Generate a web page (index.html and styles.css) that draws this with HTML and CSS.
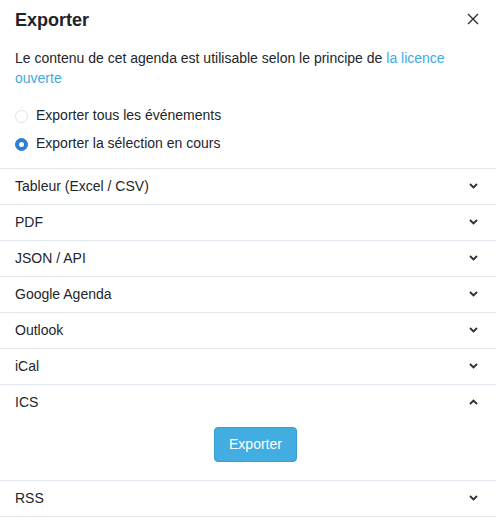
FILE: index.html
```html
<!DOCTYPE html>
<html lang="fr">
<head>
<meta charset="utf-8">
<title>Exporter</title>
<link rel="stylesheet" href="styles.css">
</head>
<body>
<div class="modal">
  <div class="header">
    <h1 class="title">Exporter</h1>
    <button class="close" aria-label="Fermer">
      <svg width="12" height="12" viewBox="0 0 12 12"><path d="M1 1L11 11M11 1L1 11" stroke="#2b2f36" stroke-width="1.4" fill="none"/></svg>
    </button>
  </div>
  <p class="intro">Le contenu de cet agenda est utilisable selon le principe de <a href="#" class="link">la licence ouverte</a></p>
  <div class="radios">
    <label class="radio"><span class="dot"></span>Exporter tous les événements</label>
    <label class="radio"><span class="dot checked"></span>Exporter la sélection en cours</label>
  </div>
  <div class="list">
    <div class="item"><div class="row"><span>Tableur (Excel / CSV)</span><svg class="chev" width="9" height="6" viewBox="0 0 9 6"><path d="M1 1L4.5 4.5L8 1" stroke="#2b2f36" stroke-width="1.8" fill="none"/></svg></div></div>
    <div class="item"><div class="row"><span>PDF</span><svg class="chev" width="9" height="6" viewBox="0 0 9 6"><path d="M1 1L4.5 4.5L8 1" stroke="#2b2f36" stroke-width="1.8" fill="none"/></svg></div></div>
    <div class="item"><div class="row"><span>JSON / API</span><svg class="chev" width="9" height="6" viewBox="0 0 9 6"><path d="M1 1L4.5 4.5L8 1" stroke="#2b2f36" stroke-width="1.8" fill="none"/></svg></div></div>
    <div class="item"><div class="row"><span>Google Agenda</span><svg class="chev" width="9" height="6" viewBox="0 0 9 6"><path d="M1 1L4.5 4.5L8 1" stroke="#2b2f36" stroke-width="1.8" fill="none"/></svg></div></div>
    <div class="item"><div class="row"><span>Outlook</span><svg class="chev" width="9" height="6" viewBox="0 0 9 6"><path d="M1 1L4.5 4.5L8 1" stroke="#2b2f36" stroke-width="1.8" fill="none"/></svg></div></div>
    <div class="item"><div class="row"><span>iCal</span><svg class="chev" width="9" height="6" viewBox="0 0 9 6"><path d="M1 1L4.5 4.5L8 1" stroke="#2b2f36" stroke-width="1.8" fill="none"/></svg></div></div>
    <div class="item open"><div class="row"><span>ICS</span><svg class="chev" width="9" height="6" viewBox="0 0 9 6"><path d="M1 5L4.5 1.5L8 5" stroke="#2b2f36" stroke-width="1.8" fill="none"/></svg></div>
      <div class="body"><button class="btn">Exporter</button></div>
    </div>
    <div class="item"><div class="row"><span>RSS</span><svg class="chev" width="9" height="6" viewBox="0 0 9 6"><path d="M1 1L4.5 4.5L8 1" stroke="#2b2f36" stroke-width="1.8" fill="none"/></svg></div></div>
  </div>
</div>
</body>
</html>
```

FILE: styles.css
```css
* { box-sizing: border-box; }
html, body { margin: 0; padding: 0; background: #fff; }
body {
  font-family: "Liberation Sans", Arial, sans-serif;
  font-size: 14px;
  color: #22262d;
  width: 498px;
}
.modal { width: 496px; }
.header {
  display: flex;
  justify-content: space-between;
  align-items: flex-start;
  padding: 10px 15px 0 15px;
}
.title {
  margin: 0;
  font-size: 18px;
  line-height: 20px;
  font-weight: bold;
  color: #1f232a;
}
.close {
  border: 0;
  background: none;
  padding: 0;
  margin: 2px 1px 0 0;
  width: 14px;
  height: 14px;
  display: flex;
  align-items: center;
  justify-content: center;
  cursor: pointer;
}
.intro {
  margin: 18px 0 0 0;
  padding: 0 15px;
  line-height: 20px;
}
.link { color: #3faadd; text-decoration: none; }
.radios {
  padding: 13px 15px 11px 15px;
  display: flex;
  flex-direction: column;
}
.radio {
  display: flex;
  align-items: center;
  height: 28px;
  gap: 8px;
}
.dot {
  width: 13px;
  height: 13px;
  border-radius: 50%;
  border: 1.5px solid #dde3ea;
  background: #fff;
  margin-top: 2px;
}
.dot.checked {
  background: #2d7fd3;
  border-color: #2d7fd3;
  position: relative;
}
.dot.checked::after {
  content: "";
  position: absolute;
  left: 50%;
  top: 50%;
  width: 5px;
  height: 5px;
  margin: -2.5px 0 0 -2.5px;
  border-radius: 50%;
  background: #fff;
}
.item { border-top: 1px solid #e1e7ee; }
.item:last-child { border-bottom: 1px solid #e1e7ee; }
.row {
  height: 35px;
  display: flex;
  align-items: center;
  justify-content: space-between;
  padding: 0 18px 2px 15px;
}
.chev { display: block; }
.body {
  display: flex;
  justify-content: center;
  padding: 7px 0 18px 15px;
}
.btn {
  font-family: "Liberation Sans", Arial, sans-serif;
  font-size: 14px;
  color: #fff;
  background: #42ade0;
  border: 1px solid #3a9fd0;
  border-radius: 4px;
  width: 83px;
  height: 35px;
  padding: 0 0 1px 0;
}
```
